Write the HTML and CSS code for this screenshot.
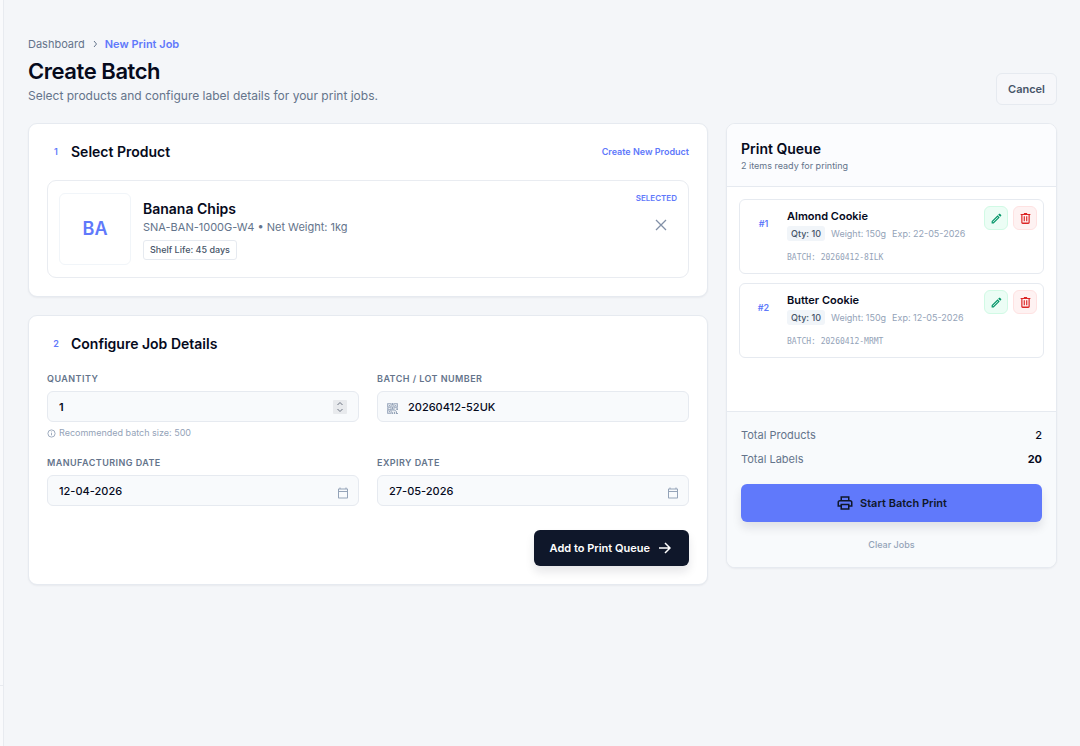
FILE: index.html
```html
<!DOCTYPE html>
<html lang="en">
<head>
    <meta charset="UTF-8">
    <meta name="viewport" content="width=device-width, initial-scale=1.0">
    <title>Create Batch</title>
    <link rel="stylesheet" href="styles.css">
</head>
<body>
    <svg class="sprite" aria-hidden="true">
        <symbol id="icon-edit" viewBox="0 0 24 24">
            <path d="M14.06 9.02l.92.92L5.92 19H5v-.92l9.06-9.06M17.66 3c-.25 0-.51.1-.7.29l-1.83 1.83 3.75 3.75 1.83-1.83c.39-.39.39-1.02 0-1.41l-2.34-2.34c-.2-.2-.45-.29-.71-.29zm-3.6 3.19L3 17.25V21h3.75L17.81 9.94l-3.75-3.75z"/>
        </symbol>
        <symbol id="icon-delete" viewBox="0 0 24 24">
            <path d="M9 2v1.500H3v2.200h1.200V19.500c0 1.400 1.100 2.500 2.500 2.500h10.600c1.400 0 2.500-1.100 2.500-2.500V5.700H21V3.500h-6V2H9zM6.400 5.700h11.200V19.500H6.400V5.700zM8.700 8v9.300h2.100V8H8.700zm4.500 0v9.300h2.100V8h-2.100z"/>
        </symbol>
        <symbol id="icon-calendar" viewBox="0 0 24 24">
            <path d="M20 3h-1V1h-2v2H7V1H5v2H4c-1.100 0-2 .9-2 2v16c0 1.100.9 2 2 2h16c1.100 0 2-.9 2-2V5c0-1.100-.9-2-2-2zm0 18H4V10h16v11zm0-13H4V5h16v3z"/>
        </symbol>
    </svg>
    <div class="app">
        <aside class="sidebar">
            <div class="sidebar-footer"></div>
        </aside>
        <main class="page">
            <header class="page-header">
                <div>
                    <nav class="breadcrumb" aria-label="Breadcrumb">
                        <a href="#">Dashboard</a>
                        <svg class="chevron" viewBox="0 0 6 8"><path d="M2 1l2.500 3L2 7"/></svg>
                        <a href="#" class="current">New Print Job</a>
                    </nav>
                    <h1>Create Batch</h1>
                    <p class="subtitle">Select products and configure label details for your print jobs.</p>
                </div>
                <button type="button" class="cancel-btn">Cancel</button>
            </header>

            <div class="columns">
                <div class="left-column">
                    <section class="card">
                        <div class="card-header">
                            <span class="step">1</span>
                            <h2>Select Product</h2>
                            <a href="#" class="create-link">Create New Product</a>
                        </div>
                        <div class="product">
                            <div class="avatar">BA</div>
                            <div class="product-info">
                                <h3>Banana Chips</h3>
                                <p>SNA-BAN-1000G-W4 • Net Weight: 1kg</p>
                                <span class="tag">Shelf Life: 45 days</span>
                            </div>
                            <div class="product-side">
                                <span class="selected">SELECTED</span>
                                <button type="button" class="remove-btn" aria-label="Remove product">
                                    <svg viewBox="0 0 12 12"><path d="M1 1l10 10M11 1L1 11"/></svg>
                                </button>
                            </div>
                        </div>
                    </section>

                    <section class="card">
                        <div class="card-header">
                            <span class="step">2</span>
                            <h2>Configure Job Details</h2>
                        </div>
                        <form>
                            <div class="form-grid">
                                <div class="field">
                                    <label for="quantity">QUANTITY</label>
                                    <div class="control">
                                        <input type="number" id="quantity" class="quantity" value="1">
                                        <svg class="spinner" viewBox="0 0 14 14"><path d="M4.500 5L7 2.500 9.500 5M4.500 9L7 11.500 9.500 9"/></svg>
                                    </div>
                                    <p class="hint">
                                        <svg viewBox="0 0 10 10"><circle cx="5" cy="5" r="4"/><path d="M5 4.500v2.500M5 2.800v.9"/></svg>
                                        Recommended batch size: 500
                                    </p>
                                </div>
                                <div class="field">
                                    <label for="batch">BATCH / LOT NUMBER</label>
                                    <div class="control">
                                        <svg class="qr" viewBox="0 0 16 16">
                                            <path class="qr-line" d="M1 1h5v5H1zM10 1h5v5h-5zM1 10h5v5H1z"/>
                                            <path d="M2.800 2.800h1.500v1.500H2.800zM11.800 2.800h1.500v1.500h-1.500zM2.800 11.800h1.500v1.500H2.800zM7.300 0h1.400v3.500H7.300zM7.300 5h1.400v3H12v1.400H9.500V12H8v-2.500H4V8h3.300zM0 7.500h2.500V9H0zM13.500 7.500H16V10h-2.500zM10.500 10.500H13V12h-2.500zM13 12h1.500v2.500H16V16h-3zM7.300 13.500H9V16H7.300zM10.200 13h1.600v3h-1.600z"/>
                                        </svg>
                                        <input type="text" id="batch" class="with-icon" value="20260412-52UK">
                                    </div>
                                </div>
                                <div class="field">
                                    <label for="mfg">MANUFACTURING DATE</label>
                                    <div class="control">
                                        <input type="text" id="mfg" value="12-04-2026">
                                        <svg class="calendar"><use href="#icon-calendar"/></svg>
                                    </div>
                                </div>
                                <div class="field">
                                    <label for="expiry">EXPIRY DATE</label>
                                    <div class="control">
                                        <input type="text" id="expiry" value="27-05-2026">
                                        <svg class="calendar"><use href="#icon-calendar"/></svg>
                                    </div>
                                </div>
                            </div>
                            <div class="form-actions">
                                <button type="button" class="add-btn">
                                    Add to Print Queue
                                    <svg viewBox="0 0 12 12"><path d="M0 6h11M6 1l5 5-5 5"/></svg>
                                </button>
                            </div>
                        </form>
                    </section>
                </div>

                <aside class="queue">
                    <div class="queue-header">
                        <h2>Print Queue</h2>
                        <p>2 items ready for printing</p>
                    </div>
                    <ul class="queue-list">
                        <li class="job">
                            <span class="job-number">#1</span>
                            <div class="job-info">
                                <h3>Almond Cookie</h3>
                                <div class="job-meta">
                                    <span class="qty">Qty: 10</span>
                                    <span>Weight: 150g</span>
                                    <span>Exp: 22-05-2026</span>
                                </div>
                                <p class="job-batch">BATCH: 20260412-8ILK</p>
                            </div>
                            <div class="job-actions">
                                <button type="button" class="edit-btn" aria-label="Edit"><svg><use href="#icon-edit"/></svg></button>
                                <button type="button" class="delete-btn" aria-label="Delete"><svg><use href="#icon-delete"/></svg></button>
                            </div>
                        </li>
                        <li class="job">
                            <span class="job-number">#2</span>
                            <div class="job-info">
                                <h3>Butter Cookie</h3>
                                <div class="job-meta">
                                    <span class="qty">Qty: 10</span>
                                    <span>Weight: 150g</span>
                                    <span>Exp: 12-05-2026</span>
                                </div>
                                <p class="job-batch">BATCH: 20260412-MRMT</p>
                            </div>
                            <div class="job-actions">
                                <button type="button" class="edit-btn" aria-label="Edit"><svg><use href="#icon-edit"/></svg></button>
                                <button type="button" class="delete-btn" aria-label="Delete"><svg><use href="#icon-delete"/></svg></button>
                            </div>
                        </li>
                    </ul>
                    <div class="queue-footer">
                        <div class="total"><span>Total Products</span><span class="count">2</span></div>
                        <div class="total"><span>Total Labels</span><span class="count bold">20</span></div>
                        <button type="button" class="print-btn">
                            <svg viewBox="0 0 24 24"><path d="M19 8h-1V3H6v5H5c-1.660 0-3 1.340-3 3v6h4v4h12v-4h4v-6c0-1.660-1.340-3-3-3zM8 5h8v3H8V5zm8 12v2H8v-4h8v2zm2-2v-2H6v2H4v-4c0-.55.45-1 1-1h14c.55 0 1 .45 1 1v4h-2z"/></svg>
                            Start Batch Print
                        </button>
                        <button type="button" class="clear-btn">Clear Jobs</button>
                    </div>
                </aside>
            </div>
        </main>
    </div>
</body>
</html>
```

FILE: styles.css
```css
* {
    box-sizing: border-box;
}
body {
    margin: 0;
    font-family: Inter, "Liberation Sans", sans-serif;
    font-size: 11px;
    line-height: 16px;
    color: #060a1c;
    background-color: #f4f6f9;
}
h1, h2, h3, p, ul {
    margin: 0;
    padding: 0;
}
a {
    color: inherit;
    text-decoration: none;
}
button, input {
    font-family: inherit;
    cursor: pointer;
}
.sprite {
    position: absolute;
    width: 0;
    height: 0;
}
.app {
    display: flex;
    min-height: 100vh;
}
.sidebar {
    display: flex;
    flex-direction: column;
    justify-content: flex-end;
    width: 4px;
    background-color: #f9fafc;
    border-right: 1px solid #e8ebf0;
}
.sidebar-footer {
    height: 61px;
    border-top: 1px solid #e8ebf0;
}
.page {
    flex: 1;
    padding: 36px 23px 24px 24px;
}
.page-header {
    display: flex;
    justify-content: space-between;
    align-items: flex-end;
    margin-bottom: 18px;
}
.breadcrumb {
    display: flex;
    align-items: center;
    gap: 7px;
    margin-bottom: 3px;
    color: #64748b;
}
.breadcrumb .current {
    color: #6079fb;
    font-weight: 600;
}
.chevron {
    width: 6px;
    height: 8px;
    fill: none;
    stroke: #64748b;
}
h1 {
    font-size: 22px;
    line-height: 32px;
    font-weight: 600;
    letter-spacing: -0.02em;
}
.subtitle {
    font-size: 12px;
    line-height: 18px;
    color: #64748b;
}
.cancel-btn {
    height: 32px;
    padding: 0 11px;
    font-size: 11px;
    font-weight: 600;
    color: #475569;
    background-color: #f6f7fa;
    border: 1px solid #e6eaf0;
    border-radius: 6px;
}
.columns {
    display: grid;
    grid-template-columns: minmax(0, 1fr) 331px;
    gap: 18px;
    align-items: start;
}
.left-column {
    display: flex;
    flex-direction: column;
    gap: 18px;
}
.card, .queue {
    background-color: #fff;
    border: 1px solid #e6eaf0;
    border-radius: 9px;
    box-shadow: 0 1px 2px rgba(15, 23, 42, 0.05);
}
.card {
    padding: 18px;
}
.card-header {
    display: flex;
    align-items: center;
    gap: 6px;
    height: 20px;
    margin-bottom: 18px;
}
.step {
    width: 18px;
    text-align: center;
    font-size: 9px;
    font-weight: 600;
    color: #6079fb;
}
h2 {
    font-size: 14px;
    line-height: 20px;
    font-weight: 600;
}
.create-link {
    margin-left: auto;
    font-size: 9px;
    font-weight: 600;
    color: #6079fb;
}
.product {
    display: flex;
    align-items: center;
    gap: 12px;
    padding: 12px 11px;
    border: 1px solid #e9ecf1;
    border-radius: 9px;
}
.avatar {
    display: flex;
    align-items: center;
    justify-content: center;
    width: 72px;
    height: 72px;
    border: 1px solid #f1f5f9;
    border-radius: 6px;
    font-size: 18px;
    font-weight: 600;
    color: #6079fb;
}
.product h3 {
    font-size: 14px;
    line-height: 20px;
    font-weight: 600;
}
.product p {
    color: #64748b;
}
.tag {
    display: inline-block;
    margin-top: 5px;
    padding: 1px 6px;
    font-size: 9px;
    font-weight: 500;
    color: #475569;
    border: 1px solid #e6eaf0;
    border-radius: 3px;
}
.product-side {
    display: flex;
    flex-direction: column;
    align-self: flex-start;
    align-items: flex-end;
    gap: 6px;
    margin-left: auto;
}
.selected {
    line-height: 10px;
    font-size: 8px;
    font-weight: 600;
    color: #6079fb;
}
.remove-btn {
    display: flex;
    padding: 10px;
    background: none;
    border: none;
}
.remove-btn svg {
    width: 12px;
    height: 12px;
    stroke: #8290a7;
    stroke-width: 1.3;
}
.form-grid {
    display: grid;
    grid-template-columns: 1fr 1fr;
    gap: 16px 18px;
}
.field label {
    display: block;
    margin-bottom: 5px;
    font-size: 9px;
    line-height: 14px;
    font-weight: 600;
    letter-spacing: 0.05em;
    color: #64748b;
}
.control {
    position: relative;
}
.control input {
    display: block;
    width: 100%;
    height: 31px;
    padding: 0 11px;
    font-size: 11px;
    font-weight: 500;
    color: #060a1c;
    background-color: #f8fafc;
    border: 1px solid #e6eaf0;
    border-radius: 6px;
}
.control .quantity {
    font-weight: 600;
    appearance: textfield;
}
.control .with-icon {
    padding-left: 30px;
}
.spinner, .calendar, .qr {
    position: absolute;
    pointer-events: none;
}
.spinner {
    top: 9px;
    right: 12px;
    width: 14px;
    height: 14px;
    fill: none;
    stroke: #6b7280;
    background-color: #e8eaed;
    border-radius: 1px;
}
.calendar {
    top: 12px;
    right: 10px;
    width: 12px;
    height: 12px;
    fill: #94a3b8;
}
.qr {
    top: 12px;
    left: 10px;
    width: 11px;
    height: 11px;
    fill: #94a3b8;
}
.qr-line {
    fill: none;
    stroke: #94a3b8;
    stroke-width: 1.5;
}
.hint {
    display: flex;
    align-items: center;
    gap: 3px;
    margin-top: 4px;
    line-height: 14px;
    font-size: 9px;
    color: #94a3b8;
}
.hint svg {
    width: 9px;
    height: 9px;
    fill: none;
    stroke: #94a3b8;
}
.form-actions {
    display: flex;
    justify-content: flex-end;
    padding-top: 24px;
}
.add-btn {
    display: flex;
    align-items: center;
    gap: 9px;
    height: 36px;
    padding: 0 18px 0 16px;
    font-size: 11px;
    font-weight: 600;
    color: #fff;
    background-color: #0f172a;
    border: none;
    border-radius: 6px;
    box-shadow: 0 6px 10px rgba(15, 23, 42, 0.1);
}
.add-btn svg {
    width: 12px;
    height: 12px;
    fill: none;
    stroke: #fff;
    stroke-width: 1.5;
}
.queue {
    overflow: hidden;
}
.queue-header {
    padding: 15px 14px 13px;
    background-color: #fbfcfe;
    border-bottom: 1px solid #e6eaf0;
}
.queue-header p {
    line-height: 14px;
    font-size: 9px;
    color: #64748b;
}
.queue-list {
    display: flex;
    flex-direction: column;
    gap: 9px;
    min-height: 224px;
    padding: 12px;
    list-style: none;
}
.job {
    display: flex;
    padding: 6px;
    border: 1px solid #e6eaf0;
    border-radius: 6px;
}
.job-number {
    width: 35px;
    padding-top: 10px;
    text-align: center;
    font-size: 9px;
    font-weight: 600;
    color: #6079fb;
}
.job-info {
    flex: 1;
    padding: 2px 0 2px 6px;
}
.job h3 {
    font-size: 11px;
    line-height: 16px;
    font-weight: 600;
}
.job-meta {
    display: flex;
    align-items: center;
    gap: 6px;
    margin: 2px 0 9px;
    line-height: 15px;
    font-size: 9px;
    color: #94a3b8;
    white-space: nowrap;
}
.qty {
    padding: 0 4px;
    font-weight: 500;
    color: #475569;
    background-color: #f1f5f9;
    border-radius: 3px;
}
.job-batch {
    line-height: 15px;
    font-family: "DejaVu Sans Mono", monospace;
    font-size: 8px;
    color: #94a3b8;
}
.job-actions {
    display: flex;
    align-items: flex-start;
    gap: 5px;
}
.job-actions button {
    display: flex;
    align-items: center;
    justify-content: center;
    width: 24px;
    height: 24px;
    padding: 0;
    border-radius: 6px;
}
.job-actions svg {
    width: 13px;
    height: 13px;
}
.edit-btn {
    background-color: #ecfdf5;
    border: 1px solid #d1fae5;
    fill: #059669;
}
.delete-btn {
    background-color: #fef2f2;
    border: 1px solid #fee2e2;
    fill: #dc2626;
}
.queue-footer {
    padding: 15px 14px 9px;
    background-color: #f8fafc;
    border-top: 1px solid #e6eaf0;
}
.total {
    display: flex;
    justify-content: space-between;
    margin-bottom: 8px;
    color: #64748b;
}
.count {
    font-weight: 500;
    color: #060a1c;
}
.bold {
    font-weight: 700;
}
.print-btn {
    display: flex;
    align-items: center;
    justify-content: center;
    gap: 6px;
    width: 100%;
    height: 38px;
    margin-top: 17px;
    font-size: 11px;
    font-weight: 600;
    color: #0f172a;
    background-color: #6079fb;
    border: none;
    border-radius: 6px;
    box-shadow: 0 6px 10px rgba(15, 23, 42, 0.1);
}
.print-btn svg {
    width: 18px;
    height: 18px;
    fill: #0f172a;
}
.clear-btn {
    display: block;
    width: 100%;
    margin-top: 9px;
    padding: 6px;
    line-height: 15px;
    font-size: 9px;
    font-weight: 500;
    color: #94a3b8;
    background: none;
    border: none;
}
```
